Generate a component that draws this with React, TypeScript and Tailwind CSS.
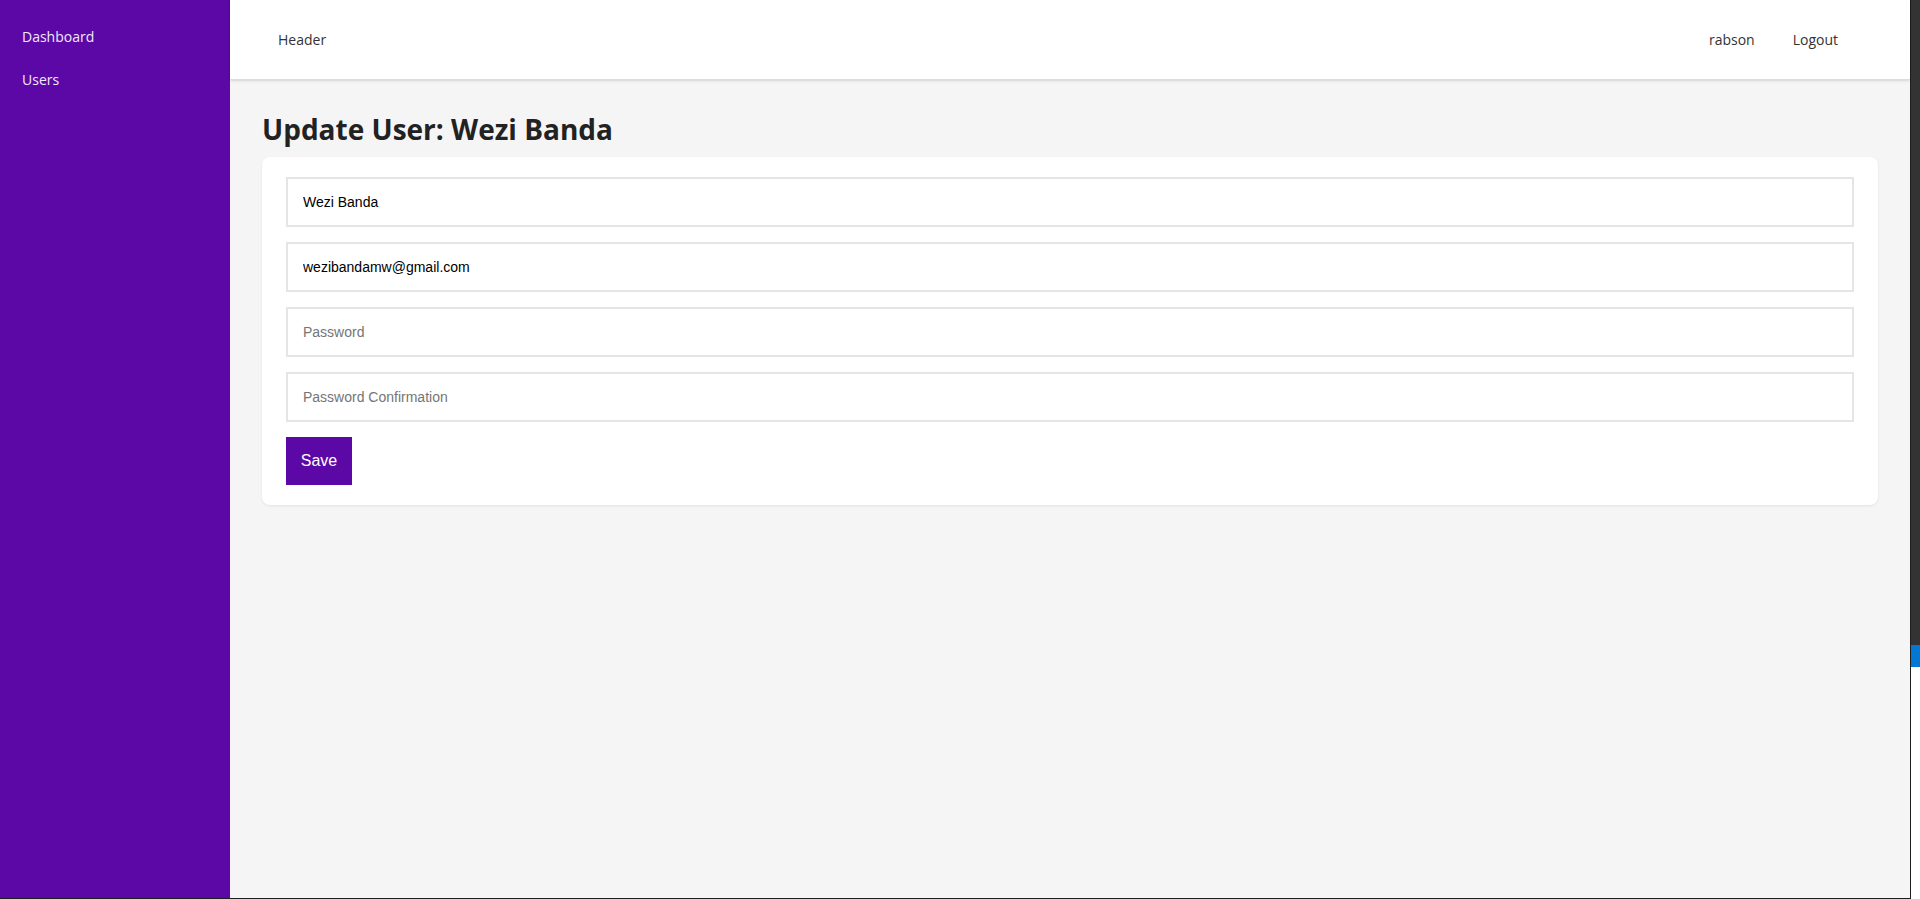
import React from 'react';

const sans = "font-['Open_Sans',sans-serif]";
const arial = "font-['Liberation_Sans',Arial,sans-serif]";

function Sidebar() {
  return (
    <aside className={`w-[230px] shrink-0 bg-[#5b08a6] pt-[15px] ${sans}`}>
      <a className="block px-[22px] py-3 text-[14px] leading-[19px] text-[#f1eaf8]" href="#">Dashboard</a>
      <a className="block px-[22px] py-3 text-[14px] leading-[19px] text-[#f1eaf8]" href="#">Users</a>
    </aside>
  );
}

function Header() {
  return (
    <header className={`h-[80px] shrink-0 flex items-center justify-between bg-white border-b border-[#dcdcdc] shadow-sm pl-12 pr-[72px] text-[14px] text-[#333] ${sans}`}>
      <span>Header</span>
      <nav className="flex items-center gap-[38px]">
        <a href="#">rabson</a>
        <a href="#">Logout</a>
      </nav>
    </header>
  );
}

function Field({ value, placeholder, type = 'text' }: { value?: string; placeholder: string; type?: string }) {
  return (
    <input
      type={type}
      defaultValue={value}
      placeholder={placeholder}
      className={`block w-full h-[50px] mb-[15px] border-2 border-[#e5e5e5] bg-white px-[15px] text-[14px] text-black placeholder:text-[#757575] outline-none ${arial}`}
    />
  );
}

export default function App() {
  return (
    <div className="flex w-[1920px] h-[899px] overflow-hidden bg-white">
      <div className="flex w-[1911px] h-[899px] border-r border-b border-[#1e1e1e]">
        <Sidebar />
        <div className="flex-1 flex flex-col bg-[#f5f5f5]">
          <Header />
          <main className="px-8 pt-[30px]">
            <h1 className={`text-[28px] leading-[38px] font-bold text-[#222] mb-[9px] ${sans}`}>Update User: Wezi Banda</h1>
            <form className="bg-white rounded-lg shadow-[0_1px_3px_rgba(0,0,0,0.08)] px-6 pt-5 pb-5">
              <Field value="Wezi Banda" placeholder="Name" />
              <Field value="wezibandamw@gmail.com" placeholder="Email" type="email" />
              <Field placeholder="Password" type="password" />
              <Field placeholder="Password Confirmation" type="password" />
              <button type="button" className={`h-[48px] w-[66px] bg-[#5b08a6] text-white text-[16px] ${arial}`}>Save</button>
            </form>
          </main>
        </div>
      </div>
      <div className="w-[9px] flex flex-col">
        <div className="h-[645px] bg-[#333]" />
        <div className="h-[22px] bg-[#0078d4]" />
        <div className="flex-1 bg-white" />
      </div>
    </div>
  );
}
